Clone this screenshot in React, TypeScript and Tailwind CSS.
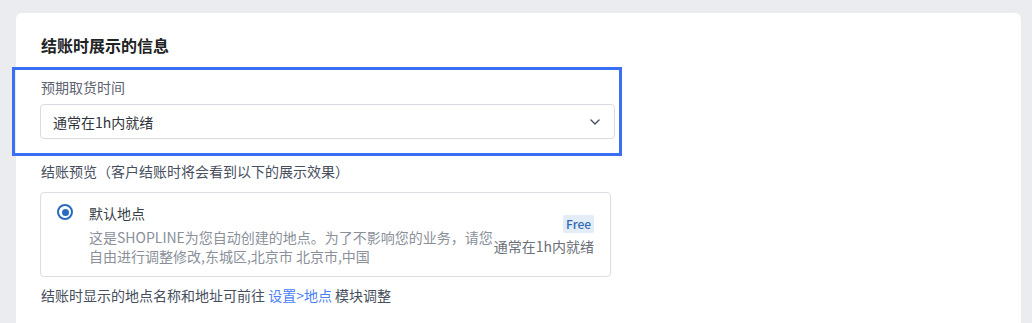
import React from "react";

const font = { fontFamily: '"Noto Sans CJK SC", "Noto Sans", sans-serif' };

export default function App() {
  return (
    <div
      className="relative w-[1032px] h-[323px] overflow-hidden bg-[#ebecf0]"
      style={font}
    >
      <div className="absolute left-[16px] top-[13px] w-[1005px] h-[340px] rounded-[6px] bg-white px-[24px] pt-[21px]">
        <h2 className="text-[16px] leading-[22px] font-semibold text-[#202223] pl-[1px]">
          结账时展示的信息
        </h2>
        <div className="mt-[21px] w-[575px]">
          <div className="text-[14px] leading-[20px] text-[#5e6370] pl-[1px]">预期取货时间</div>
          <div className="mt-[7px] h-[35px] rounded-[4px] border border-[#d9dbe3] flex items-center pl-[12px] pr-[14px]">
            <span className="flex-1 text-[14px] leading-[20px] text-[#30343b]">通常在1h内就绪</span>
            <svg width="10" height="6" viewBox="0 0 10 6" fill="none">
              <path d="M1 1l4 4 4-4" stroke="#474f5e" strokeWidth="1.4" strokeLinecap="round" strokeLinejoin="round" />
            </svg>
          </div>
        </div>
        <div className="mt-[22px] text-[14px] leading-[20px] text-[#474f5e] pl-[1px]">
          结账预览（客户结账时将会看到以下的展示效果）
        </div>
        <div className="mt-[11px] w-[571px] h-[85px] rounded-[4px] border border-[#dcdee4] flex items-center pl-[16px] pr-[16px]">
          <div className="self-start mt-[10px] flex items-start gap-[16px] flex-1 min-w-0">
            <div className="mt-[1px] w-[16px] h-[16px] rounded-full border-[2px] border-[#2b6bbf] flex items-center justify-center shrink-0">
              <div className="w-[7px] h-[7px] rounded-full bg-[#2b6bbf]" />
            </div>
            <div className="w-[406px]">
              <div className="text-[14px] leading-[20px] text-[#3a3f47]">默认地点</div>
              <div className="mt-[5px] text-[14px] leading-[19px] text-[#8a8f99]">
                这是SHOPLINE为您自动创建的地点。为了不影响您的业务，请您自由进行调整修改,东城区,北京市 北京市,中国
              </div>
            </div>
          </div>
          <div className="flex flex-col items-end shrink-0 mt-[2px]">
            <span className="px-[3px] h-[18px] leading-[18px] text-[12px] font-medium text-[#2f6ab3] bg-[#e4ecf7] rounded-[2px]">
              Free
            </span>
            <span className="mt-[3px] text-[14px] leading-[20px] text-[#6b7079]">通常在1h内就绪</span>
          </div>
        </div>
        <div className="mt-[8px] text-[14px] leading-[20px] text-[#474f5e] pl-[1px]">
          结账时显示的地点名称和地址可前往 <span className="text-[#4a7ff5]">设置&gt;地点</span> 模块调整
        </div>
      </div>
      <div className="absolute left-[12px] top-[67px] w-[610px] h-[89px] border-[3px] border-[#3a6ef3] pointer-events-none" />
    </div>
  );
}
